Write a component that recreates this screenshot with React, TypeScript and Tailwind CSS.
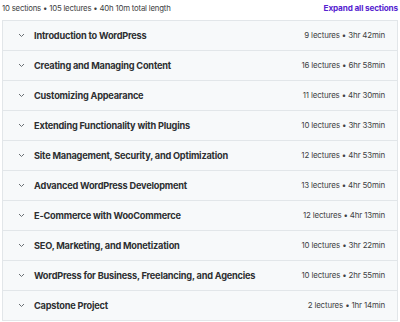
import React from "react";

const sections = [
  ["Introduction to WordPress", "9 lectures • 3hr 42min"],
  ["Creating and Managing Content", "16 lectures • 6hr 58min"],
  ["Customizing Appearance", "11 lectures • 4hr 30min"],
  ["Extending Functionality with Plugins", "10 lectures • 3hr 33min"],
  ["Site Management, Security, and Optimization", "12 lectures • 4hr 53min"],
  ["Advanced WordPress Development", "13 lectures • 4hr 50min"],
  ["E-Commerce with WooCommerce", "12 lectures • 4hr 13min"],
  ["SEO, Marketing, and Monetization", "10 lectures • 3hr 22min"],
  ["WordPress for Business, Freelancing, and Agencies", "10 lectures • 2hr 55min"],
  ["Capstone Project", "2 lectures • 1hr 14min"],
];

function Chevron() {
  return (
    <svg width="7" height="5" viewBox="0 0 7 5" fill="none" className="shrink-0">
      <path d="M1 1L3.5 3.5L6 1" stroke="#6a6f73" strokeWidth="1" />
    </svg>
  );
}

export default function App() {
  return (
    <div className="w-[400px] h-[322px] bg-white" style={{ fontFamily: "Inter, 'Noto Sans', sans-serif" }}>
      <div className="flex items-center justify-between h-[20px] px-[2px] pb-[3px]">
        <span className="text-[7.8px] text-[#3e4143] tracking-[-0.2px]">10 sections • 105 lectures • 40h 10m total length</span>
        <span className="text-[8.2px] font-bold text-[#5624d0] tracking-[-0.15px]">Expand all sections</span>
      </div>
      <div className="mx-[2px] border border-[#e2e6e9] border-b-0">
        {sections.map(([t, m]) => (
          <div key={t} className="h-[30px] flex items-center bg-[#f7f9fa] border-b border-[#e2e6e9] pl-[15px] pr-[12px]">
            <Chevron />
            <span className="ml-[9px] text-[9.2px] font-bold text-[#2d2f31] tracking-[-0.2px] flex-1">{t}</span>
            <span className="text-[7.9px] text-[#3e4143] tracking-[-0.15px]">{m}</span>
          </div>
        ))}
      </div>
    </div>
  );
}
